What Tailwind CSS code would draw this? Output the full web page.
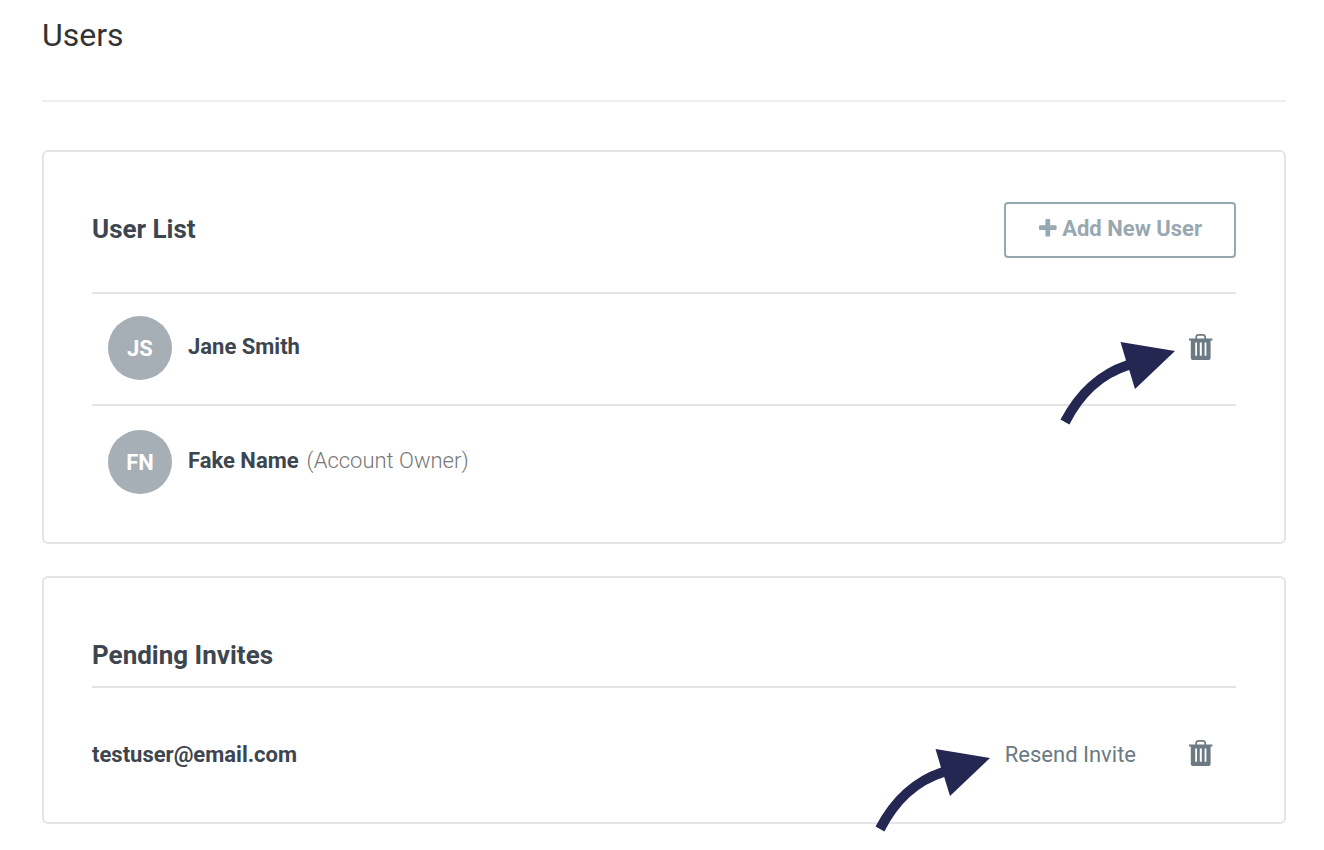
<!DOCTYPE html>
<html lang="en">
<head>
    <meta charset="UTF-8">
    <meta name="viewport" content="width=device-width, initial-scale=1.0">
    <title>Users</title>
    <!-- Tailwind CSS CDN for styling -->
    <script src="https://cdn.jsdelivr.net/npm/@tailwindcss/browser@4"></script>
</head>
<body class="bg-white font-['Roboto',sans-serif] text-[#3d464f]">
    <!-- Shared icons -->
    <svg class="hidden" xmlns="http://www.w3.org/2000/svg">
        <symbol id="icon-trash" viewBox="0 1 24 27">
            <path d="M7.2 6V3.6Q7.6 1.9 9.6 1.9H13.8Q15.8 1.9 16.2 3.6V6" fill="none" stroke="currentColor" stroke-width="1.8"/>
            <path fill="currentColor" fill-rule="evenodd" d="M0 5.6H23.4V7.6H21.6V24.4Q21.6 27 19 27H4.4Q1.8 27 1.8 24.4V7.6H0ZM6.2 9.6V22.8H8V9.6ZM10.8 9.6V22.8H12.8V9.6ZM15.6 9.6V22.8H17.4V9.6Z"/>
        </symbol>
        <symbol id="icon-arrow" viewBox="0 0 116 85">
            <path fill="#232751" d="M.5 78.5Q24 33.5 66 19.4L60.5 1L115 10L75 48L69.2 29Q31 41 9.4 83.4Z"/>
        </symbol>
    </svg>

    <main class="pt-[15px] pb-6 pl-[42px] pr-[38px]">
        <h1 class="text-[32px] leading-10 text-[#333]">Users</h1>
        <hr class="mt-[45px] mb-12 border-t-2 border-[#eee]">

        <!-- User list -->
        <section class="rounded-md border-2 border-[#e3e4e5] px-12 pt-[50px] pb-12">
            <div class="flex items-center justify-between">
                <h2 class="pb-0.5 text-[26px] leading-8 font-bold">User List</h2>
                <button type="button" class="flex h-14 items-center gap-1 rounded border-2 border-[#98a8b0] px-8 pb-0.5 text-[22px] leading-7 font-bold text-[#98a8b0]">
                    <svg class="mb-0.5 h-5 w-5" viewBox="0 0 20 20" fill="currentColor">
                        <path d="M8 1H11.4Q12.2 1 12.2 2V7.3H17.6Q18.6 7.3 18.6 8.3V11Q18.6 12 17.6 12H12.2V17.4Q12.2 18.4 11.4 18.4H8.4Q7.4 18.4 7.4 17.4V12H2Q1 12 1 11V8.3Q1 7.3 2 7.3H7.4V2Q7.4 1 8.4 1Z"/>
                    </svg>
                    Add New User
                </button>
            </div>

            <ul class="mt-[34px]">
                <li class="relative flex items-center border-t-2 border-[#e3e4e5] pt-[22px] pb-6 pl-4 pr-[23px]">
                    <span class="flex size-16 items-center justify-center rounded-full bg-[#a6aeb6] pt-0.5 text-[22px] leading-7 font-bold text-white">JS</span>
                    <span class="pb-0.5 pl-4 text-[22px] leading-7 font-bold">Jane Smith</span>
                    <button type="button" aria-label="Remove Jane Smith" class="ml-auto pb-0.5 text-[#6b7a83]">
                        <svg class="h-[27px] w-6"><use href="#icon-trash"/></svg>
                    </button>
                    <svg class="absolute top-[47px] right-[60px] z-10 h-[85px] w-[116px]"><use href="#icon-arrow"/></svg>
                </li>
                <li class="flex items-center border-t-2 border-[#e3e4e5] pt-6 pl-4 pr-[23px]">
                    <span class="flex size-16 items-center justify-center rounded-full bg-[#a6aeb6] pt-0.5 text-[22px] leading-7 font-bold text-white">FN</span>
                    <span class="pb-0.5 pl-4 text-[22px] leading-7 font-bold">Fake Name</span>
                    <span class="pb-0.5 pl-2 text-[22px] leading-7 font-light text-[#777]">(Account Owner)</span>
                </li>
            </ul>
        </section>

        <!-- Pending invites -->
        <section class="mt-8 rounded-md border-2 border-[#e3e4e5] px-12 pt-[61px] pb-[53px]">
            <h2 class="pb-[15px] text-[26px] leading-8 font-bold">Pending Invites</h2>
            <div class="relative flex items-center border-t-2 border-[#e3e4e5] pt-[52px] pr-[23px] text-[22px] leading-7">
                <span class="pt-px font-bold">testuser@email.com</span>
                <a href="#" class="ml-auto pt-px text-[#6b7a83]">Resend Invite</a>
                <button type="button" aria-label="Delete invite" class="ml-[53px] pb-0.5 text-[#6b7a83]">
                    <svg class="h-[27px] w-6"><use href="#icon-trash"/></svg>
                </button>
                <svg class="absolute top-[60px] right-[245px] z-10 h-[85px] w-[116px]"><use href="#icon-arrow"/></svg>
            </div>
        </section>
    </main>
</body>
</html>
